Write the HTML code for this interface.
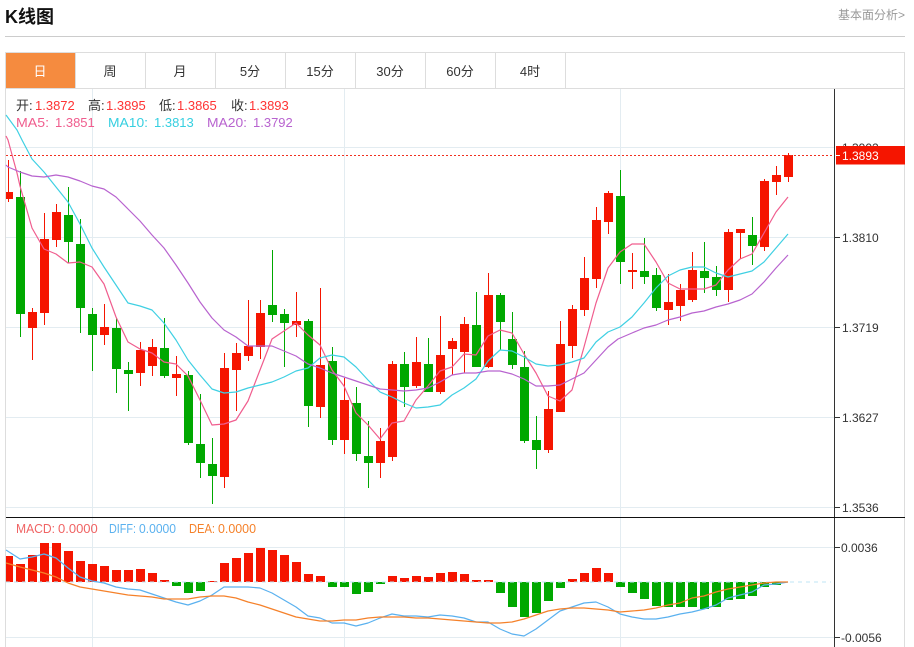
<!DOCTYPE html>
<html><head><meta charset="utf-8">
<style>
html,body{margin:0;padding:0;background:#fff;width:914px;height:647px;overflow:hidden}
svg{display:block}
text{font-family:"Liberation Sans","Noto Sans CJK SC",sans-serif;font-size:13px}
.a{font-size:12px}
.c{shape-rendering:crispEdges}
.l{fill:none;stroke-width:1.2;stroke-linejoin:round}
</style></head>
<body>
<svg width="914" height="647" viewBox="0 0 914 647" xmlns="http://www.w3.org/2000/svg">
<!-- header -->
<text x="5" y="23" style="font-size:18px;font-weight:bold" fill="#111">K线图</text>
<text x="838" y="19" style="font-size:12px" fill="#999">基本面分析&gt;</text>
<path class="c" d="M5 36.5H905" stroke="#ccc" fill="none"/>
<!-- frame + tabs -->
<path class="c" d="M5.5 647V52.5H904.5V647M5 88.5H905" stroke="#ddd" fill="none"/>
<path class="c" d="M75.5 53V88M145.5 53V88M215.5 53V88M285.5 53V88M355.5 53V88M425.5 53V88M495.5 53V88M565.5 53V88" stroke="#ddd" fill="none"/>
<rect x="6" y="53" width="69" height="35" fill="#f58b3f"/>
<g text-anchor="middle" fill="#333">
<text x="40" y="76" fill="#fff">日</text>
<text x="110" y="76">周</text>
<text x="180" y="76">月</text>
<text x="250" y="76">5分</text>
<text x="320" y="76">15分</text>
<text x="390" y="76">30分</text>
<text x="460" y="76">60分</text>
<text x="530" y="76">4时</text>
</g>
<!-- grid -->
<path class="c" d="M6 147.5H834M6 237.5H834M6 327.5H834M6 417.5H834M6 507.5H834M6 547.5H834M6 637.5H834M92.5 89V647M344.5 89V647M620.5 89V647" stroke="#e3ecf1" fill="none"/>
<!-- wicks -->
<path class="c" fill="none" stroke="#f51500" d="M8.5 160V202M32.5 308V360M44.5 213V325M56.5 204V247M104.5 304V345M140.5 342V386M152.5 339V376M176.5 356V396M224.5 353V488M236.5 343V411M248.5 300V361M260.5 300V359M296.5 292V337M320.5 288V418M344.5 378V454M380.5 428V478M392.5 361V461M416.5 337V388M440.5 316V394M452.5 338V375M464.5 317V373M488.5 273V368M548.5 391V453M560.5 321V412M572.5 305V358M584.5 257V316M596.5 207V288M608.5 191V234M632.5 253V289M668.5 274V325M680.5 284V321M692.5 252V302M728.5 229V302M740.5 229V259M764.5 179V251M776.5 166V195M788.5 153V182"/>
<path class="c" fill="none" stroke="#00a800" d="M20.5 171V337M68.5 187V263M80.5 219V333M92.5 308V371M116.5 318V393M128.5 362V411M164.5 318V378M188.5 371V445M200.5 394V478M212.5 438V504M272.5 250V322M284.5 309V367M308.5 319V427M332.5 347V445M356.5 387V461M368.5 421V488M404.5 352V407M428.5 338V392M476.5 292V367M500.5 293V350M512.5 312V369M524.5 351V443M536.5 416V469M620.5 170V284M644.5 238V284M656.5 268V311M704.5 242V293M716.5 266V296M752.5 217V265"/>
<!-- bodies -->
<path class="c" fill="#f51500" d="M6 192h7V199h-7zM28 312h9V328h-9zM40 239h9V313h-9zM52 212h9V240h-9zM100 327h9V335h-9zM136 350h9V373h-9zM148 347h9V366h-9zM172 374h9V378h-9zM220 368h9V477h-9zM232 353h9V370h-9zM244 346h9V356h-9zM256 313h9V347h-9zM292 321h9V325h-9zM316 365h9V407h-9zM340 400h9V440h-9zM376 441h9V463h-9zM388 364h9V457h-9zM412 362h9V386h-9zM436 355h9V392h-9zM448 341h9V349h-9zM460 324h9V352h-9zM484 295h9V367h-9zM544 409h9V450h-9zM556 344h9V412h-9zM568 309h9V346h-9zM580 278h9V310h-9zM592 220h9V279h-9zM604 193h9V222h-9zM628 270h9V272h-9zM664 302h9V310h-9zM676 290h9V306h-9zM688 270h9V300h-9zM724 232h9V290h-9zM736 229h9V233h-9zM760 181h9V247h-9zM772 175h9V182h-9zM784 155h9V177h-9z"/>
<path class="c" fill="#00a800" d="M16 197h9V314h-9zM64 215h9V242h-9zM76 244h9V308h-9zM88 314h9V335h-9zM112 328h9V369h-9zM124 370h9V374h-9zM160 348h9V376h-9zM184 375h9V443h-9zM196 444h9V463h-9zM208 464h9V476h-9zM268 305h9V315h-9zM280 314h9V323h-9zM304 321h9V406h-9zM328 361h9V440h-9zM352 403h9V454h-9zM364 456h9V463h-9zM400 364h9V387h-9zM424 364h9V392h-9zM472 325h9V367h-9zM496 295h9V322h-9zM508 339h9V365h-9zM520 367h9V441h-9zM532 440h9V450h-9zM616 196h9V262h-9zM640 271h9V277h-9zM652 275h9V308h-9zM700 271h9V278h-9zM712 277h9V290h-9zM748 235h9V246h-9z"/>
<!-- MA lines -->
<polyline class="l" stroke="#f05d8e" points="6,136 8,140 17,173 20,186 32,228 44,249 56,254 68,263 80,262 92,267 104,284 116,317 128,342 140,349 152,353 164,362 176,364 188,376 200,400 212,425 224,424 236,420 248,401 260,370 272,339 284,331 296,323 308,335 320,345 332,370 344,386 356,413 368,425 380,439 392,423 404,421 416,400 428,386 440,371 452,367 464,354 476,355 488,336 500,330 512,333 524,354 536,373 548,396 560,401 572,390 584,347 596,303 608,268 620,252 632,244 644,244 656,262 668,283 680,289 692,289 704,289 716,285 728,270 740,259 752,254 764,233 776,212 788,197"/>
<polyline class="l" stroke="#3fd0e3" points="6,115 17,130 22,140 32,159 44,172 56,187 68,202 80,224 92,248 104,267 116,285 128,303 140,306 152,310 164,323 176,340 188,360 200,375 212,389 224,393 236,392 248,388 260,385 272,382 284,377 296,371 308,368 320,358 332,355 344,357 356,367 368,380 380,392 392,397 404,403 416,408 428,407 440,405 452,395 464,388 476,379 488,361 500,350 512,351 524,357 536,364 548,366 560,365 572,362 584,358 596,342 608,332 620,327 632,317 644,303 656,288 668,276 680,270 692,267 704,267 716,273 728,277 740,274 752,271 764,262 776,248 788,234"/>
<polyline class="l" stroke="#b863cf" points="6,165 8,167 20,172 32,176 44,177 56,175 68,177 80,181 92,186 104,189 116,197 128,209 140,221 152,235 164,248 176,265 188,283 200,302 212,318 224,330 236,337 248,346 260,346 272,346 284,351 296,356 308,364 320,368 332,373 344,377 356,381 368,385 380,389 392,390 404,391 416,390 428,388 440,382 452,375 464,373 476,373 488,371 500,371 512,374 524,379 536,386 548,386 560,385 572,379 584,373 596,360 608,347 618,339 632,333 644,328 656,325 668,320 680,317 692,313 704,311 716,307 728,304 740,300 752,294 764,282 776,268 788,255"/>
<!-- price line -->
<path d="M6 155.5H834" stroke="#f0301f" stroke-width="1" stroke-dasharray="2 2" fill="none" class="c"/>
<!-- legend -->
<g>
<text x="16" y="110" fill="#333">开:</text><text x="35" y="110" fill="#f33">1.3872</text>
<text x="88" y="110" fill="#333">高:</text><text x="106" y="110" fill="#f33">1.3895</text>
<text x="159" y="110" fill="#333">低:</text><text x="177" y="110" fill="#f33">1.3865</text>
<text x="231" y="110" fill="#333">收:</text><text x="249" y="110" fill="#f33">1.3893</text>
<text x="16" y="127" fill="#f05d8e" textLength="33" lengthAdjust="spacingAndGlyphs">MA5:</text><text x="55" y="127" fill="#f05d8e">1.3851</text>
<text x="108" y="127" fill="#36cfe0" textLength="40" lengthAdjust="spacingAndGlyphs">MA10:</text><text x="154" y="127" fill="#36cfe0">1.3813</text>
<text x="207" y="127" fill="#b863cf" textLength="40" lengthAdjust="spacingAndGlyphs">MA20:</text><text x="253" y="127" fill="#b863cf">1.3792</text>
</g>
<!-- axis -->
<path class="c" d="M834.5 89V647M835 237.5H840M835 327.5H840M835 417.5H840M835 507.5H840M835 547.5H840M835 637.5H840" stroke="#333" fill="none"/>
<path class="c" d="M6 517.5H905" stroke="#111" fill="none"/>
<g fill="#333">
<text class="a" x="842" y="152">1.3902</text>
<text class="a" x="842" y="242">1.3810</text>
<text class="a" x="842" y="332">1.3719</text>
<text class="a" x="842" y="422">1.3627</text>
<text class="a" x="842" y="512">1.3536</text>
<text class="a" x="841" y="552">0.0036</text>
<text class="a" x="841" y="642">-0.0056</text>
</g>
<rect class="c" x="836" y="146" width="69" height="18.5" fill="#f51500"/>
<path class="c" d="M836 155.5H840" stroke="#fff" fill="none"/>
<text class="a" x="842" y="160" fill="#fff">1.3893</text>
<!-- MACD bars -->
<path class="c" fill="#f51500" d="M6 556h7V582h-7zM16 564h9V582h-9zM28 555h9V582h-9zM40 543h9V582h-9zM52 543h9V582h-9zM64 551h9V582h-9zM76 561h9V582h-9zM88 564h9V582h-9zM100 566h9V582h-9zM112 570h9V582h-9zM124 570h9V582h-9zM136 569h9V582h-9zM148 573h9V582h-9zM160 580h9V582h-9zM208 581h9V582h-9zM220 563h9V582h-9zM232 558h9V582h-9zM244 553h9V582h-9zM256 548h9V582h-9zM268 550h9V582h-9zM280 555h9V582h-9zM292 562h9V582h-9zM304 574h9V582h-9zM316 576h9V582h-9zM388 576h9V582h-9zM400 578h9V582h-9zM412 576h9V582h-9zM424 577h9V582h-9zM436 573h9V582h-9zM448 572h9V582h-9zM460 574h9V582h-9zM472 580h9V582h-9zM484 580h9V582h-9zM568 579h9V582h-9zM580 573h9V582h-9zM592 568h9V582h-9zM604 573h9V582h-9z"/>
<path class="c" fill="#00a800" d="M172 582h9V586h-9zM184 582h9V593h-9zM196 582h9V591h-9zM328 582h9V587h-9zM340 582h9V587h-9zM352 582h9V594h-9zM364 582h9V592h-9zM376 582h9V584h-9zM496 582h9V593h-9zM508 582h9V607h-9zM520 582h9V617h-9zM532 582h9V613h-9zM544 582h9V601h-9zM556 582h9V588h-9zM616 582h9V587h-9zM628 582h9V593h-9zM640 582h9V599h-9zM652 582h9V606h-9zM664 582h9V607h-9zM676 582h9V607h-9zM688 582h9V607h-9zM700 582h9V609h-9zM712 582h9V607h-9zM724 582h9V600h-9zM736 582h9V599h-9zM748 582h9V596h-9zM760 582h9V587h-9zM772 582h9V585h-9z"/>
<path class="c" d="M6 582H831" stroke="#bfe6f5" stroke-dasharray="4 4" fill="none"/>
<polyline class="l" stroke="#5ab1ef" points="6,550 20,559 32,557 44,554 56,558 68,568 80,577 92,581 104,583 116,587 128,589 140,590 152,594 164,598 176,602 188,605 200,601 212,595 224,587 236,587 248,587 260,588 272,593 284,600 296,607 308,616 320,618 332,623 344,623 356,626 368,623 380,618 392,614 404,616 416,616 428,617 440,615 452,616 464,618 476,622 488,622 500,629 512,634 524,636 536,629 548,620 560,611 572,607 584,603 596,602 608,607 620,614 632,617 644,619 656,619 668,617 680,614 692,612 704,609 716,605 728,598 740,595 752,592 764,585 776,584 788,582"/>
<polyline class="l" stroke="#f5812a" points="6,563 20,567 32,570 44,573 56,577 68,583 80,587 92,589 104,591 116,593 128,595 140,596 152,597 164,599 176,599 188,599 200,597 212,596 224,596 236,598 248,602 260,605 272,609 284,613 296,617 308,619 320,621 332,621 344,620 356,620 368,618 380,617 392,617 404,617 416,618 428,618 440,619 452,620 464,621 476,622 488,623 500,623 512,622 524,619 536,615 548,611 560,609 572,608 584,608 596,609 608,610 620,612 632,611 644,610 656,608 668,605 680,603 692,598 704,596 716,592 728,589 740,587 752,585 764,583 776,582 788,582"/>
<text x="16" y="533" fill="#f06464" textLength="39" lengthAdjust="spacingAndGlyphs">MACD:</text><text x="58" y="533" fill="#f06464">0.0000</text>
<text x="109" y="533" fill="#5ab1ef" textLength="27" lengthAdjust="spacingAndGlyphs">DIFF:</text><text x="139" y="533" fill="#5ab1ef" textLength="37" lengthAdjust="spacingAndGlyphs">0.0000</text>
<text x="189" y="533" fill="#f5812a" textLength="26" lengthAdjust="spacingAndGlyphs">DEA:</text><text x="218" y="533" fill="#f5812a" textLength="38" lengthAdjust="spacingAndGlyphs">0.0000</text>
</svg>
</body></html>
